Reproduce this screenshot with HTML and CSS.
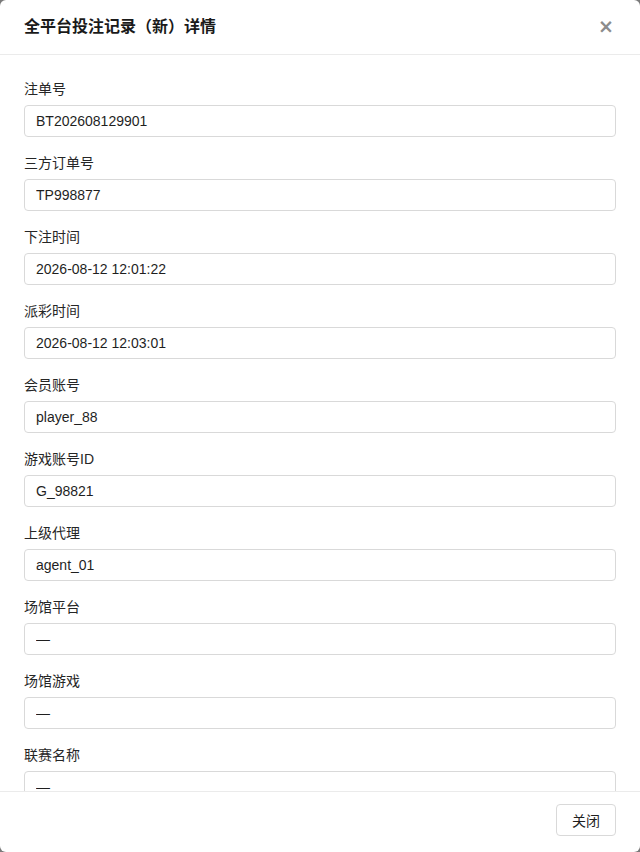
FILE: index.html
```html
<!DOCTYPE html>
<html lang="zh-CN">

<head>
    <meta charset="UTF-8" />
    <meta name="viewport" content="width=device-width, initial-scale=1.0" />
    <title>全平台投注记录（新）详情</title>
    <link rel="stylesheet" href="styles.css">
</head>

<body>
    <div class="modal">
        <div class="modal-header">
            <h2>全平台投注记录（新）详情</h2>
            <span class="close">&times;</span>
        </div>
        <div class="modal-body">
            <div class="field">
                <label>注单号</label>
                <input type="text" value="BT202608129901" readonly>
            </div>
            <div class="field">
                <label>三方订单号</label>
                <input type="text" value="TP998877" readonly>
            </div>
            <div class="field">
                <label>下注时间</label>
                <input type="text" value="2026-08-12 12:01:22" readonly>
            </div>
            <div class="field">
                <label>派彩时间</label>
                <input type="text" value="2026-08-12 12:03:01" readonly>
            </div>
            <div class="field">
                <label>会员账号</label>
                <input type="text" value="player_88" readonly>
            </div>
            <div class="field">
                <label>游戏账号ID</label>
                <input type="text" value="G_98821" readonly>
            </div>
            <div class="field">
                <label>上级代理</label>
                <input type="text" value="agent_01" readonly>
            </div>
            <div class="field">
                <label>场馆平台</label>
                <input type="text" value="—" readonly>
            </div>
            <div class="field">
                <label>场馆游戏</label>
                <input type="text" value="—" readonly>
            </div>
            <div class="field">
                <label>联赛名称</label>
                <input type="text" value="—" readonly>
            </div>
        </div>
        <div class="modal-footer">
            <button type="button">关闭</button>
        </div>
    </div>
</body>

</html>
```

FILE: styles.css
```css
* {
    margin: 0;
    padding: 0;
    box-sizing: border-box;
}

html,
body {
    height: 100%;
}

body {
    background-color: #7a7a7a;
    font-family: "Liberation Sans", "Noto Sans CJK SC", sans-serif;
    color: #1f1f1f;
}

.modal {
    height: 100%;
    background-color: #fff;
    border-radius: 6px;
    display: flex;
    flex-direction: column;
    overflow: hidden;
}

.modal-header {
    height: 55px;
    flex-shrink: 0;
    padding: 0 24px;
    display: flex;
    align-items: center;
    justify-content: space-between;
    border-bottom: 1px solid #ebebeb;
}

.modal-header h2 {
    font-size: 16px;
    font-weight: bold;
    line-height: 22px;
    color: #1a1a1a;
}

.close {
    font-family: "DejaVu Sans", sans-serif;
    font-size: 19px;
    font-weight: bold;
    line-height: 20px;
    color: #8c8c8c;
    margin-right: 2px;
    margin-bottom: 3px;
}

.modal-body {
    flex: 1;
    overflow: hidden;
    padding: 24px 24px 0;
}

.field {
    margin-bottom: 16px;
}

.field label {
    display: block;
    font-size: 14px;
    line-height: 20px;
    margin-bottom: 6px;
    color: #262626;
}

.field input {
    display: block;
    width: 100%;
    height: 32px;
    padding: 0 11px;
    border: 1px solid #d9d9d9;
    border-radius: 4px;
    font-family: inherit;
    font-size: 14px;
    color: #1f1f1f;
    background-color: #fff;
    outline: none;
}

.modal-footer {
    flex-shrink: 0;
    height: 61px;
    padding: 12px 24px 0;
    display: flex;
    justify-content: flex-end;
    align-items: flex-start;
    border-top: 1px solid #ebebeb;
}

.modal-footer button {
    width: 60px;
    height: 32px;
    border: 1px solid #d9d9d9;
    border-radius: 4px;
    background-color: #fff;
    font-family: inherit;
    font-size: 14px;
    color: #1f1f1f;
}
```
